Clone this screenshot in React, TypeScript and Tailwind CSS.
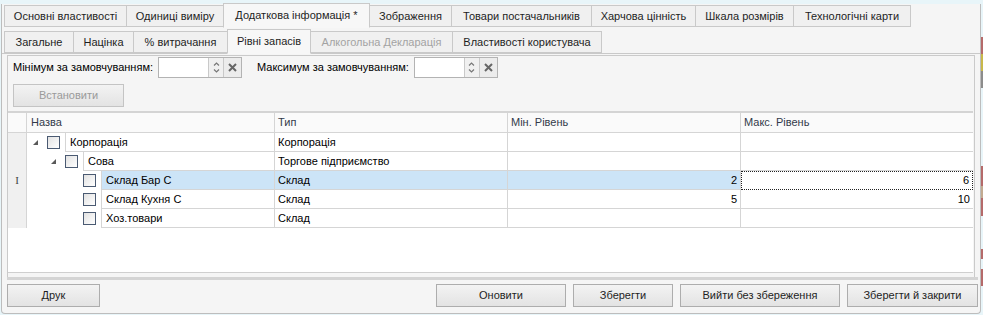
const topTabs = [
  { label: 'Основні властивості', w: 'w-[123px]' },
  { label: 'Одиниці виміру', w: 'w-[98px]' },
  { label: 'Додаткова інформація *', w: 'w-[147px]', active: true },
  { label: 'Зображення', w: 'w-[83px]' },
  { label: 'Товари постачальників', w: 'w-[141px]' },
  { label: 'Харчова цінність', w: 'w-[105px]' },
  { label: 'Шкала розмірів', w: 'w-[99px]' },
  { label: 'Технологічні карти', w: 'w-[118px]' }
];

const subTabs = [
  { label: 'Загальне', w: 'w-[70px]' },
  { label: 'Націнка', w: 'w-[61px]' },
  { label: '% витрачання', w: 'w-[95px]' },
  { label: 'Рівні запасів', w: 'w-[84px]', active: true },
  { label: 'Алкогольна Декларація', w: 'w-[143px]', disabled: true },
  { label: 'Властивості користувача', w: 'w-[150px]' }
];

const rows = [
  { level: 0, name: 'Корпорація', type: 'Корпорація', min: '', max: '', parent: true },
  { level: 1, name: 'Сова', type: 'Торгове підприємство', min: '', max: '', parent: true },
  { level: 2, name: 'Склад Бар С', type: 'Склад', min: '2', max: '6', selected: true },
  { level: 2, name: 'Склад Кухня С', type: 'Склад', min: '5', max: '10' },
  { level: 2, name: 'Хоз.товари', type: 'Склад', min: '', max: '' }
];

const indent = ['w-[20px]', 'w-[38px]', 'w-[56px]'];

function Tab({ label, w, active, disabled }: { label: string; w: string; active?: boolean; disabled?: boolean }) {
  return (
    <div
      className={`${w} flex items-center justify-center border border-[#c9c9c9] -ml-px first:ml-0 ${
        active ? 'h-[25px] bg-[#f7f7f7] border-b-[#f7f7f7] relative z-10 -mb-px' : 'h-[22px] bg-[#f0f0f0]'
      } ${disabled ? 'text-[#a3a3a3]' : 'text-[#1e1e1e]'}`}
    >
      {label}
    </div>
  );
}

function Spin({ label }: { label: string }) {
  return (
    <div className="flex items-center">
      <span className="mr-[5px]">{label}</span>
      <div className="flex h-[21px] border border-[#b3b3b3]">
        <div className="w-[49px] bg-white" />
        <div className="w-[15px] bg-[#f0f0f0] border-l border-[#c9c9c9] flex items-center justify-center">
          <svg width="7" height="13" viewBox="0 0 7 13" fill="none" stroke="#777" strokeWidth="1.2">
            <path d="M1 4.5 L3.5 2 L6 4.5" />
            <path d="M1 8.5 L3.5 11 L6 8.5" />
          </svg>
        </div>
        <div className="w-[18px] bg-[#ececec] border-l border-[#c9c9c9] flex items-center justify-center">
          <svg width="9" height="9" viewBox="0 0 9 9" stroke="#666" strokeWidth="2">
            <path d="M1 1 L8 8 M8 1 L1 8" />
          </svg>
        </div>
      </div>
    </div>
  );
}

function Check() {
  return (
    <div className="w-[13px] h-[13px] border border-[#4a5a72] bg-gradient-to-br from-[#e2e2e2] to-white" />
  );
}

function Btn({ label, w, disabled }: { label: string; w: string; disabled?: boolean }) {
  return (
    <div
      className={`${w} h-[23px] flex items-center justify-center border bg-gradient-to-b from-[#f3f3f3] to-[#e3e3e3] ${
        disabled ? 'text-[#9a9a9a] border-[#c4c4c4]' : 'text-[#1e1e1e] border-[#adadad]'
      }`}
    >
      {label}
    </div>
  );
}

export default function App() {
  return (
    <div className="w-[983px] h-[315px] flex bg-[#e8f5f9] overflow-hidden text-[11px] leading-none font-['Liberation_Sans',Arial,sans-serif]">
      <div className="w-[980px] mt-[4px] h-[310px] flex flex-col bg-[#f5f5f5] border-l border-r border-b border-[#bdbdbd] rounded-b-[4px] ml-px">
        <div className="flex items-end pl-[2px] h-[23px]">
          {topTabs.map((t) => (
            <Tab key={t.label} {...t} />
          ))}
        </div>
        <div className="flex items-end pl-[2px] h-[27px] border-b border-[#c9c9c9]">
          {subTabs.map((t) => (
            <Tab key={t.label} {...t} />
          ))}
        </div>

        <div className="mx-[5px] mt-px flex flex-col border border-[#cacaca] border-b-0 flex-1">
          <div className="flex flex-col gap-[6px] px-[5px] pt-[1px] h-[55px]">
            <div className="flex items-center gap-[15px] h-[21px]">
              <Spin label="Мінімум за замовчуванням:" />
              <Spin label="Максимум за замовчуванням:" />
            </div>
            <Btn label="Встановити" w="w-[111px]" disabled />
          </div>

          <div className="flex flex-col h-[162px] bg-white border-t-[2px] border-[#d4d4d4] border-b border-b-[#cfcfcf] mr-px">
            <div className="flex h-[20px] bg-[#fafafa] border-b border-[#d5d5d5] text-[#333a4a]">
              <div className="w-[19px] border-r border-[#d5d5d5]" />
              <div className="w-[248px] border-r border-[#d5d5d5] flex items-center pl-[4px]">Назва</div>
              <div className="w-[233px] border-r border-[#d5d5d5] flex items-center pl-[3px]">Тип</div>
              <div className="w-[233px] border-r border-[#d5d5d5] flex items-center pl-[3px]">Мін. Рівень</div>
              <div className="flex-1 flex items-center pl-[3px]">Макс. Рівень</div>
            </div>
            <div className="flex">
              <div className="w-[19px] bg-[#f0f0f0] border-r border-[#d5d5d5] flex flex-col">
                {rows.map((r) => (
                  <div key={r.name} className="h-[19px] flex items-center justify-center">
                    {r.selected && <span className="font-['Liberation_Serif',serif] text-[11px] text-[#444]">I</span>}
                  </div>
                ))}
              </div>
              <div className="flex-1 flex flex-col">
                {rows.map((r) => (
                  <div key={r.name} className="flex h-[19px]">
                    <div className="w-[248px] flex border-r border-[#d5d5d5]">
                      <div className={`${indent[r.level]} shrink-0 flex items-center justify-end pr-[9px]`}>
                        {r.parent && (
                          <svg width="5" height="5" viewBox="0 0 5 5">
                            <polygon points="5,0 5,5 0,5" fill="#595959" />
                          </svg>
                        )}
                      </div>
                      <div className="w-[18px] shrink-0 flex items-center">
                        <Check />
                      </div>
                      <div
                        className={`flex-1 flex items-center pl-[4px] border-l border-b border-[#d5d5d5] ${
                          r.selected ? 'bg-[#cce4f7]' : ''
                        }`}
                      >
                        {r.name}
                      </div>
                    </div>
                    <div
                      className={`w-[233px] flex items-center pl-[3px] border-r border-b border-[#d5d5d5] ${
                        r.selected ? 'bg-[#cce4f7]' : ''
                      }`}
                    >
                      {r.type}
                    </div>
                    <div
                      className={`w-[233px] flex items-center justify-end pr-[3px] border-r border-b border-[#d5d5d5] ${
                        r.selected ? 'bg-[#cce4f7]' : ''
                      }`}
                    >
                      {r.min}
                    </div>
                    <div
                      className={`flex-1 flex items-center justify-end pr-[3px] border-b ${
                        r.selected ? 'border border-dotted border-[#222]' : 'border-[#d5d5d5]'
                      }`}
                    >
                      {r.max}
                    </div>
                  </div>
                ))}
              </div>
            </div>
          </div>
        </div>

        <div className="ml-[5px] mr-[2px] border-t-[3px] border-[#d4d4d4] flex items-center h-[36px] pb-[2px] gap-[7px]">
          <Btn label="Друк" w="w-[93px]" />
          <div className="flex-1" />
          <Btn label="Оновити" w="w-[130px]" />
          <Btn label="Зберегти" w="w-[100px]" />
          <Btn label="Вийти без збереження" w="w-[160px]" />
          <Btn label="Зберегти й закрити" w="w-[131px]" />
        </div>
      </div>
      <div className="w-[2px] flex flex-col">
        <div className="h-[37px]" />
        <div className="h-[17px] bg-[#b56a6a]" />
        <div className="h-[17px] bg-[#c8b84a]" />
        <div className="h-[17px] bg-[#8c8c8c]" />
        <div className="h-[78px]" />
        <div className="h-[20px] bg-[#b56a6a]" />
        <div className="h-[12px] bg-[#c2aa90]" />
        <div className="h-[18px] bg-[#b56a6a]" />
        <div className="h-[33px]" />
        <div className="h-[10px] bg-[#b56a6a]" />
        <div className="h-[10px]" />
        <div className="h-[17px] bg-[#b56a6a]" />
      </div>
    </div>
  );
}
